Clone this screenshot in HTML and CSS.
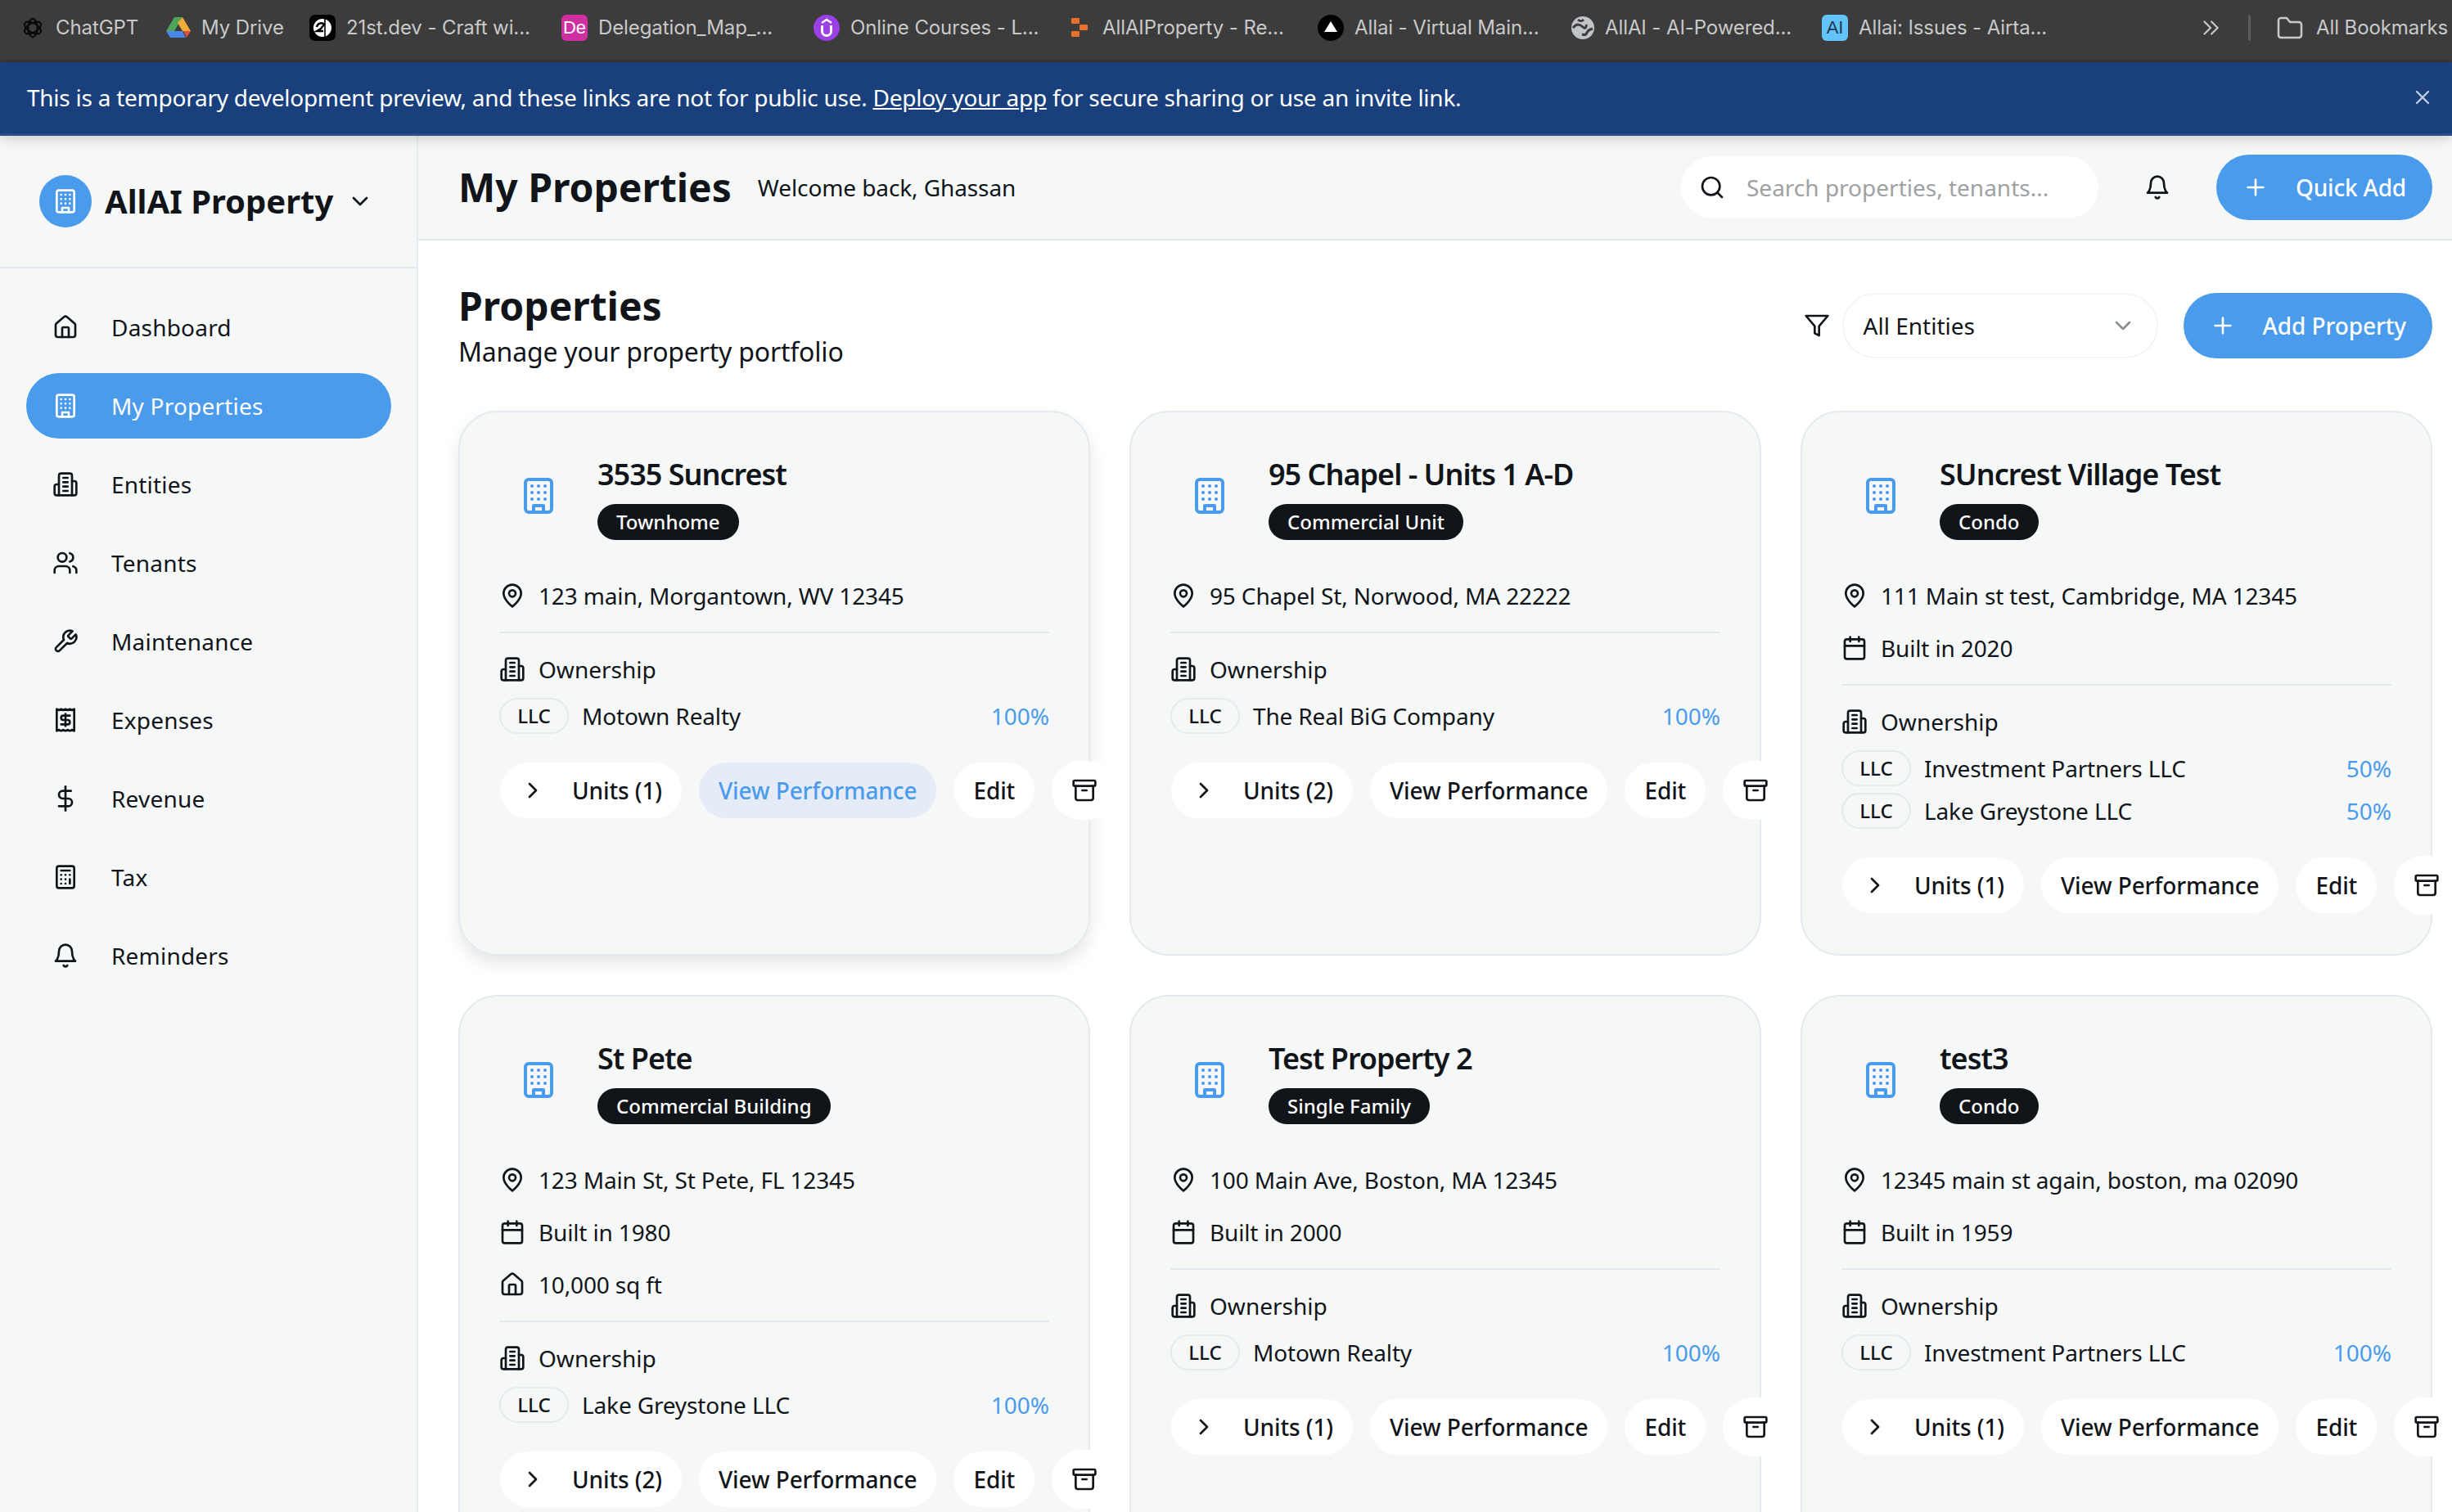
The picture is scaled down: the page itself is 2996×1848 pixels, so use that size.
FILE: index.html
```html
<!DOCTYPE html>
<html lang="en">
<head>
<meta charset="utf-8">
<title>AllAI Property - My Properties</title>
<link rel="stylesheet" href="styles.css">
</head>
<body>
<svg class="sprite" xmlns="http://www.w3.org/2000/svg">
  <symbol id="i-home" viewBox="0 0 24 24"><path d="M15 21v-8a1 1 0 0 0-1-1h-4a1 1 0 0 0-1 1v8"/><path d="M3 10a2 2 0 0 1 .709-1.528l7-5.999a2 2 0 0 1 2.582 0l7 5.999A2 2 0 0 1 21 10v9a2 2 0 0 1-2 2H5a2 2 0 0 1-2-2z"/></symbol>
  <symbol id="i-building" viewBox="0 0 24 24"><rect x="4" y="2" width="16" height="20" rx="2"/><path d="M9 22v-4h6v4"/><path d="M8 6h.01M16 6h.01M12 6h.01M12 10h.01M12 14h.01M16 10h.01M16 14h.01M8 10h.01M8 14h.01"/></symbol>
  <symbol id="i-entity" viewBox="0 0 24 24"><path d="M6 22V4a2 2 0 0 1 2-2h8a2 2 0 0 1 2 2v18Z"/><path d="M6 12H4a2 2 0 0 0-2 2v6a2 2 0 0 0 2 2h2"/><path d="M18 9h2a2 2 0 0 1 2 2v9a2 2 0 0 1-2 2h-2"/><path d="M10 6h4M10 10h4M10 14h4M10 18h4"/></symbol>
  <symbol id="i-users" viewBox="0 0 24 24"><path d="M16 21v-2a4 4 0 0 0-4-4H6a4 4 0 0 0-4 4v2"/><circle cx="9" cy="7" r="4"/><path d="M22 21v-2a4 4 0 0 0-3-3.87"/><path d="M16 3.13a4 4 0 0 1 0 7.75"/></symbol>
  <symbol id="i-wrench" viewBox="0 0 24 24"><path d="M14.7 6.3a1 1 0 0 0 0 1.4l1.6 1.6a1 1 0 0 0 1.4 0l3.77-3.77a6 6 0 0 1-7.94 7.94l-6.91 6.91a2.12 2.12 0 0 1-3-3l6.91-6.91a6 6 0 0 1 7.94-7.94l-3.76 3.76z"/></symbol>
  <symbol id="i-receipt" viewBox="0 0 24 24"><path d="M4 2v20l2-1 2 1 2-1 2 1 2-1 2 1 2-1 2 1V2l-2 1-2-1-2 1-2-1-2 1-2-1-2 1Z"/><path d="M16 8h-6a2 2 0 1 0 0 4h4a2 2 0 1 1 0 4H8"/><path d="M12 17.5v-11"/></symbol>
  <symbol id="i-dollar" viewBox="0 0 24 24"><path d="M12 1v22"/><path d="M17 5H9.5a3.5 3.5 0 0 0 0 7h5a3.5 3.5 0 0 1 0 7H6"/></symbol>
  <symbol id="i-calc" viewBox="0 0 24 24"><rect x="4" y="2" width="16" height="20" rx="2"/><path d="M8 6h8M16 14v4"/><path d="M16 10h.01M12 10h.01M8 10h.01M12 14h.01M8 14h.01M12 18h.01M8 18h.01"/></symbol>
  <symbol id="i-bell" viewBox="0 0 24 24"><path d="M6 8a6 6 0 0 1 12 0c0 7 3 9 3 9H3s3-2 3-9"/><path d="M10.3 21a1.94 1.94 0 0 0 3.4 0"/></symbol>
  <symbol id="i-pin" viewBox="0 0 24 24"><path d="M20 10c0 6-8 12-8 12s-8-6-8-12a8 8 0 0 1 16 0Z"/><circle cx="12" cy="10" r="3"/></symbol>
  <symbol id="i-cal" viewBox="0 0 24 24"><rect x="3" y="4" width="18" height="18" rx="2"/><path d="M16 2v4M8 2v4M3 10h18"/></symbol>
  <symbol id="i-right" viewBox="0 0 24 24"><path d="m9 18 6-6-6-6"/></symbol>
  <symbol id="i-down" viewBox="0 0 24 24"><path d="m6 9 6 6 6-6"/></symbol>
  <symbol id="i-search" viewBox="0 0 24 24"><circle cx="11" cy="11" r="8"/><path d="m21 21-4.3-4.3"/></symbol>
  <symbol id="i-plus" viewBox="0 0 24 24"><path d="M5 12h14M12 5v14"/></symbol>
  <symbol id="i-x" viewBox="0 0 24 24"><path d="M18 6 6 18M6 6l12 12"/></symbol>
  <symbol id="i-filter" viewBox="0 0 24 24"><path d="M22 3H2l8 9.46V19l4 2v-8.54Z"/></symbol>
  <symbol id="i-archive" viewBox="0 0 24 24"><rect x="2" y="3" width="20" height="5" rx="1"/><path d="M4 8v11a2 2 0 0 0 2 2h12a2 2 0 0 0 2-2V8"/><path d="M10 12h4"/></symbol>
</svg>

<div class="bookmarks">
  <div class="bm bm-1"><svg class="fav fav-gpt" viewBox="0 0 28 28"><g><ellipse cx="14" cy="14" rx="6" ry="12"/><ellipse cx="14" cy="14" rx="6" ry="12" transform="rotate(60 14 14)"/><ellipse cx="14" cy="14" rx="6" ry="12" transform="rotate(120 14 14)"/></g></svg><span>ChatGPT</span></div>
  <div class="bm bm-2"><svg class="fav fav-drive" viewBox="0 0 30 28"><polygon class="d-g" points="10,1 20,1 10,18 0,18 "/><polygon class="d-y" points="20,1 30,18 20,18 14,8"/><polygon class="d-b" points="0,18 20,18 24,26 5,26"/><polygon class="d-r" points="21,18 30,18 25,26"/></svg><span>My Drive</span></div>
  <div class="bm bm-3"><svg class="fav" viewBox="0 0 32 32"><rect width="32" height="32" rx="7" fill="#000"/><circle cx="16" cy="16" r="11" fill="#fff"/><path d="M9 15c1-5 7-6 9-3l-4 5-5 3 8 0" fill="none" stroke="#000" stroke-width="2.4"/><path d="M19 5v22" stroke="#000" stroke-width="1.6"/></svg><span>21st.dev - Craft wi...</span></div>
  <div class="bm bm-4"><span class="fav-tile fav-de">De</span><span>Delegation_Map_...</span></div>
  <div class="bm bm-5"><svg class="fav" viewBox="0 0 32 32"><circle cx="16" cy="16" r="16" fill="#9b3fe6"/><path d="M10.500 13v7a5.500 5.500 0 0 0 11 0v-7" fill="none" stroke="#fff" stroke-width="3"/><path d="M10 10l6-4 6 4" fill="none" stroke="#fff" stroke-width="2.500"/></svg><span>Online Courses - L...</span></div>
  <div class="bm bm-6"><svg class="fav fav-small" viewBox="0 0 20 24"><rect x="0" y="0" width="10" height="7" rx="1" fill="#e8702a"/><rect x="10" y="8" width="10" height="7" rx="1" fill="#e8702a"/><rect x="0" y="16" width="10" height="7" rx="1" fill="#e8702a"/></svg><span>AllAIProperty - Re...</span></div>
  <div class="bm bm-7"><svg class="fav" viewBox="0 0 32 32"><circle cx="16" cy="16" r="16" fill="#000"/><path d="M16 8l8 13H8z" fill="#fff"/></svg><span>Allai - Virtual Main...</span></div>
  <div class="bm bm-8"><svg class="fav fav-globe" viewBox="0 0 28 28"><circle cx="14" cy="14" r="14" fill="#c1c4c9"/><path d="M2 14c5-6 9-4 12-1s5 0 4-3M8 4c2 2 5 2 7 0M26 15c-4 1-6 2-7 5s-3 3-6 2" fill="none" stroke="#3c3c3c" stroke-width="3"/></svg><span>AllAI - AI-Powered...</span></div>
  <div class="bm bm-9"><span class="fav-tile fav-ai">AI</span><span>Allai: Issues - Airta...</span></div>
  <div class="bm-tools">
    <svg class="ic ic-more" viewBox="0 0 24 24"><path d="m5 5 7 7-7 7M13 5l7 7-7 7"/></svg>
    <span class="bm-sep"></span>
    <svg class="ic ic-folder" viewBox="0 0 32 28"><path d="M2 5a3 3 0 0 1 3-3h7l4 5h11a3 3 0 0 1 3 3v13a3 3 0 0 1-3 3H5a3 3 0 0 1-3-3Z"/></svg>
    <span>All Bookmarks</span>
  </div>
</div>

<div class="banner">
  <p class="banner-text">This is a temporary development preview, and these links are not for public use. <a class="banner-link" href="#">Deploy your app</a> for secure sharing or use an invite link.</p>
  <svg class="ic ic-close"><use href="#i-x"/></svg>
</div>

<div class="shell">
  <aside class="sidebar">
    <div class="brand">
      <span class="brand-mark"><svg class="ic ic-white"><use href="#i-building"/></svg></span>
      <span class="brand-name">AllAI Property</span>
      <svg class="ic ic-brand-chev"><use href="#i-down"/></svg>
    </div>
    <nav class="nav">
      <a class="nav-item"><svg class="ic"><use href="#i-home"/></svg><span>Dashboard</span></a>
      <a class="nav-item is-active"><svg class="ic"><use href="#i-building"/></svg><span>My Properties</span></a>
      <a class="nav-item"><svg class="ic"><use href="#i-entity"/></svg><span>Entities</span></a>
      <a class="nav-item"><svg class="ic"><use href="#i-users"/></svg><span>Tenants</span></a>
      <a class="nav-item"><svg class="ic"><use href="#i-wrench"/></svg><span>Maintenance</span></a>
      <a class="nav-item"><svg class="ic"><use href="#i-receipt"/></svg><span>Expenses</span></a>
      <a class="nav-item"><svg class="ic"><use href="#i-dollar"/></svg><span>Revenue</span></a>
      <a class="nav-item"><svg class="ic"><use href="#i-calc"/></svg><span>Tax</span></a>
      <a class="nav-item"><svg class="ic"><use href="#i-bell"/></svg><span>Reminders</span></a>
    </nav>
  </aside>

  <div class="content">
    <header class="topbar">
      <h1 class="page-title">My Properties</h1>
      <span class="welcome">Welcome back, Ghassan</span>
      <div class="search"><svg class="ic"><use href="#i-search"/></svg><span class="search-ph">Search properties, tenants...</span></div>
      <span class="bell"><svg class="ic"><use href="#i-bell"/></svg></span>
      <button class="cta"><svg class="ic ic-white"><use href="#i-plus"/></svg><span>Quick Add</span></button>
    </header>

    <main class="main">
      <div class="section-head">
        <div>
          <h2 class="section-title">Properties</h2>
          <p class="section-sub">Manage your property portfolio</p>
        </div>
        <div class="section-tools">
          <svg class="ic"><use href="#i-filter"/></svg>
          <div class="select"><span>All Entities</span><svg class="ic ic-grey"><use href="#i-down"/></svg></div>
          <button class="cta cta-add"><svg class="ic ic-white"><use href="#i-plus"/></svg><span>Add Property</span></button>
        </div>
      </div>

      <div class="grid">
        <article class="card is-hover">
          <div class="card-head"><span class="card-icon"><svg class="ic ic-blue"><use href="#i-building"/></svg></span><div><h3 class="card-title">3535 Suncrest</h3><span class="type-chip">Townhome</span></div></div>
          <div class="facts">
            <div class="fact"><svg class="ic"><use href="#i-pin"/></svg><span>123 main, Morgantown, WV 12345</span></div>
          </div>
          <div class="own-head"><svg class="ic"><use href="#i-entity"/></svg><span>Ownership</span></div>
          <div class="owners">
            <div class="owner"><span class="llc">LLC</span><span class="owner-name">Motown Realty</span><span class="pct">100%</span></div>
          </div>
          <div class="actions"><button class="btn btn-units"><svg class="ic"><use href="#i-right"/></svg><span>Units (1)</span></button><button class="btn is-hot">View Performance</button><button class="btn">Edit</button><button class="btn btn-icon"><svg class="ic"><use href="#i-archive"/></svg></button></div>
        </article>

        <article class="card">
          <div class="card-head"><span class="card-icon"><svg class="ic ic-blue"><use href="#i-building"/></svg></span><div><h3 class="card-title">95 Chapel - Units 1 A-D</h3><span class="type-chip">Commercial Unit</span></div></div>
          <div class="facts">
            <div class="fact"><svg class="ic"><use href="#i-pin"/></svg><span>95 Chapel St, Norwood, MA 22222</span></div>
          </div>
          <div class="own-head"><svg class="ic"><use href="#i-entity"/></svg><span>Ownership</span></div>
          <div class="owners">
            <div class="owner"><span class="llc">LLC</span><span class="owner-name">The Real BiG Company</span><span class="pct">100%</span></div>
          </div>
          <div class="actions"><button class="btn btn-units"><svg class="ic"><use href="#i-right"/></svg><span>Units (2)</span></button><button class="btn">View Performance</button><button class="btn">Edit</button><button class="btn btn-icon"><svg class="ic"><use href="#i-archive"/></svg></button></div>
        </article>

        <article class="card">
          <div class="card-head"><span class="card-icon"><svg class="ic ic-blue"><use href="#i-building"/></svg></span><div><h3 class="card-title">SUncrest Village Test</h3><span class="type-chip">Condo</span></div></div>
          <div class="facts">
            <div class="fact"><svg class="ic"><use href="#i-pin"/></svg><span>111 Main st test, Cambridge, MA 12345</span></div>
            <div class="fact"><svg class="ic"><use href="#i-cal"/></svg><span>Built in 2020</span></div>
          </div>
          <div class="own-head"><svg class="ic"><use href="#i-entity"/></svg><span>Ownership</span></div>
          <div class="owners">
            <div class="owner"><span class="llc">LLC</span><span class="owner-name">Investment Partners LLC</span><span class="pct">50%</span></div>
            <div class="owner"><span class="llc">LLC</span><span class="owner-name">Lake Greystone LLC</span><span class="pct">50%</span></div>
          </div>
          <div class="actions"><button class="btn btn-units"><svg class="ic"><use href="#i-right"/></svg><span>Units (1)</span></button><button class="btn">View Performance</button><button class="btn">Edit</button><button class="btn btn-icon"><svg class="ic"><use href="#i-archive"/></svg></button></div>
        </article>

        <article class="card">
          <div class="card-head"><span class="card-icon"><svg class="ic ic-blue"><use href="#i-building"/></svg></span><div><h3 class="card-title">St Pete</h3><span class="type-chip">Commercial Building</span></div></div>
          <div class="facts">
            <div class="fact"><svg class="ic"><use href="#i-pin"/></svg><span>123 Main St, St Pete, FL 12345</span></div>
            <div class="fact"><svg class="ic"><use href="#i-cal"/></svg><span>Built in 1980</span></div>
            <div class="fact"><svg class="ic"><use href="#i-home"/></svg><span>10,000 sq ft</span></div>
          </div>
          <div class="own-head"><svg class="ic"><use href="#i-entity"/></svg><span>Ownership</span></div>
          <div class="owners">
            <div class="owner"><span class="llc">LLC</span><span class="owner-name">Lake Greystone LLC</span><span class="pct">100%</span></div>
          </div>
          <div class="actions"><button class="btn btn-units"><svg class="ic"><use href="#i-right"/></svg><span>Units (2)</span></button><button class="btn">View Performance</button><button class="btn">Edit</button><button class="btn btn-icon"><svg class="ic"><use href="#i-archive"/></svg></button></div>
        </article>

        <article class="card">
          <div class="card-head"><span class="card-icon"><svg class="ic ic-blue"><use href="#i-building"/></svg></span><div><h3 class="card-title">Test Property 2</h3><span class="type-chip">Single Family</span></div></div>
          <div class="facts">
            <div class="fact"><svg class="ic"><use href="#i-pin"/></svg><span>100 Main Ave, Boston, MA 12345</span></div>
            <div class="fact"><svg class="ic"><use href="#i-cal"/></svg><span>Built in 2000</span></div>
          </div>
          <div class="own-head"><svg class="ic"><use href="#i-entity"/></svg><span>Ownership</span></div>
          <div class="owners">
            <div class="owner"><span class="llc">LLC</span><span class="owner-name">Motown Realty</span><span class="pct">100%</span></div>
          </div>
          <div class="actions"><button class="btn btn-units"><svg class="ic"><use href="#i-right"/></svg><span>Units (1)</span></button><button class="btn">View Performance</button><button class="btn">Edit</button><button class="btn btn-icon"><svg class="ic"><use href="#i-archive"/></svg></button></div>
        </article>

        <article class="card">
          <div class="card-head"><span class="card-icon"><svg class="ic ic-blue"><use href="#i-building"/></svg></span><div><h3 class="card-title">test3</h3><span class="type-chip">Condo</span></div></div>
          <div class="facts">
            <div class="fact"><svg class="ic"><use href="#i-pin"/></svg><span>12345 main st again, boston, ma 02090</span></div>
            <div class="fact"><svg class="ic"><use href="#i-cal"/></svg><span>Built in 1959</span></div>
          </div>
          <div class="own-head"><svg class="ic"><use href="#i-entity"/></svg><span>Ownership</span></div>
          <div class="owners">
            <div class="owner"><span class="llc">LLC</span><span class="owner-name">Investment Partners LLC</span><span class="pct">100%</span></div>
          </div>
          <div class="actions"><button class="btn btn-units"><svg class="ic"><use href="#i-right"/></svg><span>Units (1)</span></button><button class="btn">View Performance</button><button class="btn">Edit</button><button class="btn btn-icon"><svg class="ic"><use href="#i-archive"/></svg></button></div>
        </article>
      </div>
    </main>
  </div>
</div>
</body>
</html>
```
FILE: styles.css
```css
* { box-sizing: border-box; }
html, body { margin: 0; height: 100%; }
body {
  display: flex;
  flex-direction: column;
  height: 100vh;
  overflow: hidden;
  background: #fff;
  color: #11151a;
  font-family: "Noto Sans", "Open Sans", sans-serif;
  font-size: 28px;
  line-height: 40px;
}
h1, h2, h3, p { margin: 0; }
button { font: inherit; color: inherit; border: 0; cursor: pointer; }
.sprite { display: none; }

.ic {
  width: 32px;
  height: 32px;
  flex: none;
  fill: none;
  stroke: #11151a;
  stroke-width: 2;
  stroke-linecap: round;
  stroke-linejoin: round;
  color: inherit;
}
.ic-white { stroke: #fff; }
.ic-blue { width: 48px; height: 48px; stroke: #4a9bec; }
.ic-grey { stroke: #8a8f93; }

/* Browser bookmarks bar */
.bookmarks {
  flex: none;
  display: flex;
  align-items: center;
  height: 76px;
  padding: 0 0 6px 27px;
  background: #3c3c3c;
  border-bottom: 2px solid #353535;
  color: #c9c9c9;
  font-family: Inter, "Liberation Sans", sans-serif;
  font-size: 24px;
  letter-spacing: -.1px;
  line-height: 32px;
  white-space: nowrap;
}
.bm { display: flex; align-items: center; gap: 13px; flex: none; }
.bm-1 { width: 176px; }
.bm-2 { width: 175px; }
.bm-3 { width: 308px; }
.bm-4 { width: 308px; }
.bm-5 { width: 315px; }
.bm-6 { width: 301px; }
.bm-7 { width: 310px; }
.bm-8 { width: 306px; }
.bm-9 { width: 462px; }
.fav { width: 32px; height: 32px; flex: none; }
.fav-gpt { width: 26px; height: 26px; margin-right: 2px; fill: none; stroke: #0a0a0a; stroke-width: 2.200; }
.fav-drive { width: 30px; height: 28px; }
.d-g { fill: #4ea45a; }
.d-y { fill: #f0ac36; }
.d-b { fill: #4a86e8; }
.d-r { fill: #dc5040; }
.fav-small { width: 20px; height: 24px; margin-right: 5px; }
.fav-globe { width: 28px; height: 28px; }
.fav-tile {
  display: flex;
  align-items: center;
  justify-content: center;
  width: 32px;
  height: 32px;
  flex: none;
  border-radius: 6px;
  font-family: "Liberation Sans", sans-serif;
  font-size: 22px;
  line-height: 32px;
}
.fav-de { background: #cf2fa0; color: #fff; }
.fav-ai { background: #63c3fb; color: #1e3a52; }
.bm-tools { display: flex; align-items: center; }
.ic-more { width: 26px; height: 26px; stroke: #c9c9c9; }
.bm-sep { width: 3px; height: 32px; margin: 0 32px 0 33px; background: #5c5c5c; border-radius: 2px; }
.ic-folder { width: 32px; height: 28px; margin-right: 16px; stroke: #c9c9c9; stroke-width: 2.500; }

/* Preview banner */
.banner {
  position: relative;
  z-index: 2;
  flex: none;
  display: flex;
  align-items: center;
  justify-content: space-between;
  height: 90px;
  padding: 0 22px 2px 33px;
  background: #19407d;
  border-bottom: 3px solid #2e4e87;
  box-shadow: 0 4px 14px rgba(0, 0, 0, .16);
  color: #fff;
  letter-spacing: -.25px;
}
.banner-link { color: #fff; text-decoration: underline; }
.ic-close { width: 28px; height: 28px; stroke: #c3cde0; }

/* App shell */
.shell { flex: 1; display: flex; min-height: 0; }
.sidebar {
  flex: none;
  width: 511px;
  background: #f6f8f8;
  border-right: 2px solid #e4eaef;
}
.brand {
  display: flex;
  align-items: center;
  height: 162px;
  padding-left: 48px;
  border-bottom: 2px solid #e4eaef;
}
.brand-mark {
  display: flex;
  align-items: center;
  justify-content: center;
  width: 64px;
  height: 64px;
  margin-right: 16px;
  border-radius: 50%;
  background: #4a9bec;
}
.brand-name { font-size: 40px; font-weight: 700; line-height: 56px; }
.ic-brand-chev { width: 32px; height: 32px; margin-left: 17px; }
.nav {
  display: flex;
  flex-direction: column;
  gap: 16px;
  padding: 32px 31px 0 32px;
}
.nav-item {
  display: flex;
  align-items: center;
  gap: 40px;
  height: 80px;
  padding-left: 32px;
  border-radius: 40px;
  letter-spacing: .2px;
}
.nav-item.is-active { background: #4a9bec; color: #fff; }
.nav-item.is-active .ic { stroke: #fff; }

.content { flex: 1; min-width: 0; display: flex; flex-direction: column; }
.topbar {
  flex: none;
  display: flex;
  align-items: center;
  height: 128px;
  padding: 0 24px 0 49px;
  background: #f6f8f8;
  border-bottom: 2px solid #e4eaef;
}
.page-title { font-size: 48px; font-weight: 700; line-height: 64px; }
.welcome { margin-left: 32px; letter-spacing: -.1px; }
.search {
  display: flex;
  align-items: center;
  gap: 26px;
  width: 510px;
  height: 76px;
  margin-left: auto;
  padding-left: 22px;
  border-radius: 38px;
  background: #fff;
}
.search-ph { color: #9fa1a3; }
.bell {
  display: flex;
  align-items: center;
  justify-content: center;
  width: 80px;
  height: 80px;
  margin: 0 32px;
}
.cta {
  display: flex;
  align-items: center;
  gap: 33px;
  height: 80px;
  padding: 0 32px;
  border-radius: 40px;
  background: #4a9bec;
  color: #fff;
  font-weight: 500;
  letter-spacing: -.2px;
}
.cta-add { letter-spacing: -.1px; }

.main { flex: 1; min-height: 0; padding: 48px 24px 0 49px; background: #fff; }
.section-head {
  display: flex;
  align-items: center;
  justify-content: space-between;
  margin-bottom: 48px;
}
.section-title { font-size: 48px; font-weight: 700; line-height: 64px; }
.section-sub { font-size: 32px; line-height: 48px; letter-spacing: -.2px; }
.section-tools { display: flex; align-items: center; }
.select {
  display: flex;
  align-items: center;
  justify-content: space-between;
  width: 386px;
  height: 80px;
  margin: 0 31px 0 15px;
  padding: 0 25px 0 24px;
  border: 2px solid #f3f5f6;
  border-radius: 40px;
  background: #fff;
}

.grid {
  display: grid;
  grid-template-columns: repeat(3, minmax(0, 1fr));
  gap: 48px;
}
.card {
  display: flex;
  flex-direction: column;
  padding: 48px;
  border: 2px solid #e4eaef;
  border-radius: 48px;
  background: #f6f8f8;
}
.card.is-hover { box-shadow: 0 10px 20px rgba(0, 0, 0, .1); }
.card-head { display: flex; align-items: center; gap: 24px; }
.card-icon { display: flex; padding: 24px; }
.card-title { font-size: 36px; font-weight: 600; letter-spacing: -1px; line-height: 56px; margin-bottom: 8px; }
.type-chip {
  display: inline-block;
  height: 44px;
  padding: 0 23px;
  border-radius: 22px;
  background: #11151a;
  color: #fff;
  font-size: 24px;
  font-weight: 500;
  line-height: 44px;
}
.facts {
  display: flex;
  flex-direction: column;
  gap: 24px;
  margin-top: 48px;
  padding-bottom: 24px;
  border-bottom: 2px solid #e4eaef;
}
.fact, .own-head { display: flex; align-items: center; gap: 16px; height: 40px; }
.fact { letter-spacing: -.15px; }
.own-head { margin-top: 24px; }
.owners { display: flex; flex-direction: column; gap: 8px; margin-top: 15px; }
.owner { display: flex; align-items: center; height: 44px; }
.llc {
  width: 85px;
  height: 44px;
  margin-right: 16px;
  border: 2px solid #e4eaef;
  border-radius: 22px;
  text-align: center;
  font-size: 24px;
  font-weight: 500;
  line-height: 40px;
}
.owner-name { flex: 1; letter-spacing: -.15px; }
.pct { color: #4a9bec; }
.actions { display: flex; align-items: center; gap: 21px; margin: 33px 0 0 1px; white-space: nowrap; }
.btn {
  flex: none;
  display: flex;
  align-items: center;
  height: 68px;
  padding: 0 24px;
  border-radius: 34px;
  background: #fff;
  font-weight: 500;
  letter-spacing: -.1px;
}
.btn-units { gap: 32px; }
.btn.is-hot { background: #e6ecf7; color: #4a9bec; }
.btn-icon { height: 72px; padding: 0 24px; border-radius: 36px; }
```
